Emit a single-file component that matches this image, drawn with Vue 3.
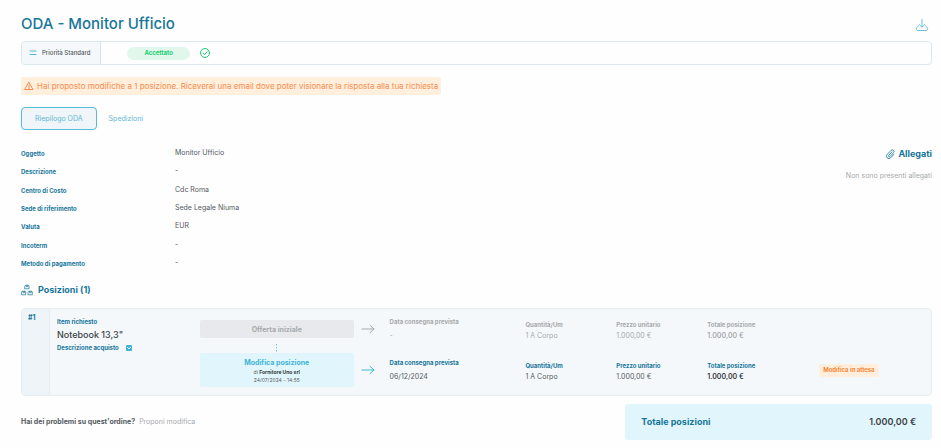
<script setup>
const details = [
  { label: 'Oggetto', value: 'Monitor Ufficio' },
  { label: 'Descrizione', value: '-' },
  { label: 'Centro di Costo', value: 'Cdc Roma' },
  { label: 'Sede di riferimento', value: 'Sede Legale Niuma' },
  { label: 'Valuta', value: 'EUR' },
  { label: 'Incoterm', value: '-' },
  { label: 'Metodo di pagamento', value: '-' },
]

const offers = [
  { id: 'initial', date: '-', quantity: '1 A Corpo', price: '1.000,00 €', total: '1.000,00 €' },
  { id: 'change', date: '06/12/2024', quantity: '1 A Corpo', price: '1.000,00 €', total: '1.000,00 €' },
]
</script>

<template>
  <main class="page">
    <header class="head">
      <h1>ODA - Monitor Ufficio</h1>
      <button class="download" type="button" aria-label="Scarica">
        <svg viewBox="0 0 14 14" width="14" height="14">
          <path d="M7 1.500v7.500M4.300 6.600L7 9.200l2.700-2.600" />
          <path d="M3.400 7.800C2.600 8.600 1.300 9.300 1.300 10.800c0 1 .7 1.700 1.700 1.700h8c1 0 1.700-.7 1.700-1.700 0-1.500-1.300-2.200-2.100-3" />
        </svg>
      </button>
    </header>

    <section class="status">
      <div class="priority">
        <svg viewBox="0 0 8 6" width="8" height="6"><path d="M1 1h6M1 4.500h6" /></svg>
        <span>Priorità Standard</span>
      </div>
      <span class="accepted">Accettato</span>
      <svg class="check" viewBox="0 0 12 12" width="12" height="12">
        <circle cx="6" cy="6" r="4.500" />
        <path d="M4 6.100l1.500 1.400L8.200 4.700" />
      </svg>
    </section>

    <p class="notice">
      <svg viewBox="0 0 10 10" width="10" height="10">
        <path d="M5 1.500L9 8.500H1z" />
        <path d="M5 4v2.200M5 7v.7" />
      </svg>
      <span>Hai proposto modifiche a 1 posizione. Riceverai una email dove poter visionare la risposta alla tua richiesta</span>
    </p>

    <nav class="tabs">
      <button class="tab active" type="button">Riepilogo ODA</button>
      <button class="tab" type="button">Spedizioni</button>
    </nav>

    <section class="summary">
      <dl class="details">
        <div v-for="d in details" :key="d.label" class="detail">
          <dt>{{ d.label }}</dt>
          <dd>{{ d.value }}</dd>
        </div>
      </dl>
      <aside class="attachments">
        <h2>
          <svg viewBox="0 0 12 12" width="10" height="10">
            <path d="M8.300 3.500L4.400 7.800a1 1 0 0 0 1.500 1.300l4.300-4.700a2 2 0 0 0-3-2.700L2.500 6.800a2.800 2.800 0 0 0 4.200 3.800l3.900-4.200" />
          </svg>
          Allegati
        </h2>
        <p>Non sono presenti allegati</p>
      </aside>
    </section>

    <h2 class="positions-title">
      <svg viewBox="0 0 12 12" width="12" height="12">
        <path d="M4 2l.5-.8h3L8 2v2.800H4zM.7 8l.5-.8h3l.5.800v2.800h-4zM7.300 8l.5-.8h3l.5.800v2.800h-4z" />
        <path d="M5.200 1.400v1.300h1.600V1.400M1.900 7.400v1.300h1.600V7.400M8.500 7.400v1.300h1.600V7.400" />
      </svg>
      Posizioni (1)
    </h2>

    <article class="card">
      <div class="index">#1</div>
      <div class="body">
        <div class="item">
          <h3>Item richiesto</h3>
          <p class="name">Notebook 13,3"</p>
          <div class="purchase">
            <span>Descrizione acquisto</span>
            <button class="expand" type="button" aria-label="Mostra descrizione acquisto">
              <svg viewBox="0 0 6 6" width="6" height="6"><path d="M1.200 2.200L3 3.900l1.800-1.700" /></svg>
            </button>
          </div>
        </div>

        <template v-for="o in offers" :key="o.id">
          <div class="step" :class="o.id">
            <strong v-if="o.id === 'initial'">Offerta iniziale</strong>
            <template v-else>
              <strong>Modifica posizione</strong>
              <span class="supplier">di <b>Fornitore Uno srl</b></span>
              <time datetime="2024-07-24T14:55">24/07/2024 - 14:55</time>
            </template>
          </div>
          <svg class="arrow" :class="o.id" viewBox="0 0 14 10" width="14" height="10">
            <path d="M1 5h12M9 1.300L13 5 9 8.700" />
          </svg>
          <dl class="field date" :class="o.id">
            <dt>Data consegna prevista</dt>
            <dd>{{ o.date }}</dd>
          </dl>
          <dl class="field" :class="o.id">
            <dt>Quantità/Um</dt>
            <dd>{{ o.quantity }}</dd>
          </dl>
          <dl class="field" :class="o.id">
            <dt>Prezzo unitario</dt>
            <dd>{{ o.price }}</dd>
          </dl>
          <dl class="field total" :class="o.id">
            <dt>Totale posizione</dt>
            <dd>{{ o.total }}</dd>
          </dl>
        </template>

        <svg class="dots" viewBox="0 0 2 8" width="2" height="8">
          <path d="M0 0h1v1.500H0zM0 3h1v1.500H0zM0 6h1v1.500H0z" />
        </svg>
        <span class="pending">Modifica in attesa</span>
      </div>
    </article>

    <footer class="foot">
      <p class="help">
        <strong>Hai dei problemi su quest'ordine?</strong>
        <a href="#">Proponi modifica</a>
      </p>
      <div class="grand">
        <span>Totale posizioni</span>
        <strong>1.000,00 €</strong>
      </div>
    </footer>
  </main>
</template>

<style>
body {
  margin: 0;
  background: #fefefe;
}
</style>

<style scoped>
.page {
  padding: 13px 9px 8px 21px;
  font-family: Inter, "Liberation Sans", sans-serif;
  font-size: 7px;
  line-height: 10px;
  color: #55595e;
}
h1, h2, h3, p, dl, dd {
  margin: 0;
}
button {
  padding: 0;
  border: 0;
  background: none;
  font: inherit;
}
svg {
  display: block;
  flex: none;
  fill: none;
  stroke: currentColor;
  stroke-linecap: round;
  stroke-linejoin: round;
}
.head {
  display: flex;
  justify-content: space-between;
  align-items: flex-end;
  margin-bottom: 6px;
  padding-right: 3px;
}
h1 {
  font-size: 15px;
  line-height: 22px;
  font-weight: 500;
  color: #17769a;
}
.download {
  padding-bottom: 3px;
  color: #6fbfdc;
}
.status {
  display: flex;
  align-items: center;
  border: 1px solid #dbe8ee;
  border-radius: 4px;
}
.priority {
  display: flex;
  align-items: center;
  gap: 5px;
  padding: 6px 10px 6px 7px;
  border-right: 1px solid #d5e4eb;
  border-radius: 3px 0 0 3px;
  background: #f4f8fb;
  font-size: 6px;
  font-weight: 500;
}
.priority svg {
  color: #51b9d8;
}
.accepted {
  margin: 0 9px 0 26px;
  padding: 1px 17px 2px;
  border-radius: 7px;
  background: #e2f7ec;
  color: #15cd72;
  font-size: 6px;
  font-weight: 700;
}
.check {
  color: #15cd72;
}
.notice {
  display: flex;
  align-items: center;
  gap: 3px;
  width: fit-content;
  margin: 12px 0;
  padding: 4px 3px;
  border-radius: 2px;
  background: #ffefdc;
  color: #f88b4c;
  font-size: 8px;
}
.tabs {
  display: flex;
  gap: 12px;
}
.tab {
  height: 23px;
  color: #63b7d5;
}
.tab.active {
  padding: 0 13px;
  border: 1px solid #55bdda;
  border-radius: 4px;
  background: #eff5f9;
}
.summary {
  display: flex;
  justify-content: space-between;
  margin-top: 14px;
}
.details {
  display: flex;
  flex-direction: column;
  justify-content: space-between;
  min-height: 128px;
}
.detail {
  display: grid;
  grid-template-columns: 154px auto;
  line-height: 18px;
}
dt, h3, .purchase {
  color: #17769a;
  font-size: 6px;
  font-weight: 700;
}
.detail dt {
  padding-top: 1px;
  line-height: 17px;
}
.attachments {
  display: flex;
  flex-direction: column;
  align-items: flex-end;
  gap: 10px;
  padding-top: 3px;
  color: #a7a9ac;
}
h2 {
  display: flex;
  align-items: center;
  gap: 3px;
  color: #17769a;
  font-size: 9px;
  line-height: 14px;
  font-weight: 700;
}
.positions-title {
  gap: 5px;
  margin: 11px 0;
}
.positions-title svg {
  stroke-width: 0.700;
}
.card {
  display: grid;
  grid-template-columns: 28px 1fr;
  border: 1px solid #e3edf2;
  border-radius: 4px;
  background: #f4f8fb;
}
.index {
  padding: 4px 6px;
  border-right: 1px solid #e3edf2;
  border-radius: 3px 0 0 3px;
  background: #eef4f8;
  color: #17769a;
  font-weight: 700;
}
.body {
  display: grid;
  grid-template-columns: 143fr 154fr 36fr 136fr 91fr 91fr 112fr 112fr;
  grid-template-rows: 26px 11px 34px;
  align-items: center;
  padding: 7px 0 8px 7px;
}
.item {
  grid-area: 1 / 1 / 4 / 2;
  align-self: start;
  padding-top: 1px;
}
h3 {
  line-height: 10px;
}
.name {
  color: #3c3f44;
  font-size: 9px;
  line-height: 16px;
  font-weight: 500;
}
.purchase {
  display: flex;
  align-items: center;
  gap: 7px;
}
.expand {
  border-radius: 1px;
  background: #3db4d6;
  color: #fff;
}
.initial {
  grid-row: 1;
}
.change {
  grid-row: 3;
}
.step {
  grid-column: 2;
  display: flex;
  flex-direction: column;
  align-items: center;
  justify-content: center;
  border-radius: 2px;
  font-size: 5px;
  line-height: 8px;
}
.step strong {
  font-size: 7px;
  line-height: 11px;
  font-weight: 700;
}
.step.initial {
  height: 18px;
  background: #e8e9ec;
  color: #a7a9ac;
}
.step.change {
  height: 34px;
  background: #e1f6fc;
}
.step.change strong {
  color: #3db4d6;
}
.supplier b {
  color: #33363a;
  font-weight: 700;
}
.arrow {
  justify-self: start;
  margin-left: 7px;
}
.arrow.initial {
  color: #a7a9ac;
}
.arrow.change {
  color: #3db4d6;
}
.field {
  display: flex;
  flex-direction: column;
  justify-content: flex-end;
  gap: 1px;
  height: 24px;
}
.field.date {
  gap: 4px;
}
.field.initial, .field.initial dt {
  color: #a7a9ac;
}
.total dd {
  font-weight: 600;
}
.total.change dd {
  color: #33363a;
}
.dots {
  grid-area: 2 / 2;
  justify-self: center;
  fill: #6cc4de;
  stroke: none;
}
.pending {
  grid-area: 3 / 8;
  justify-self: start;
  padding: 1px 4px 2px;
  border-radius: 2px;
  background: #ffefdc;
  color: #f97a1f;
  font-size: 6px;
  font-weight: 600;
}
.foot {
  display: grid;
  grid-template-columns: 605fr 307fr;
  align-items: center;
  margin-top: 8px;
}
.help {
  display: flex;
  gap: 4px;
}
.help strong {
  font-weight: 700;
}
.help a {
  color: #a7a9ac;
  text-decoration: none;
}
.grand {
  display: flex;
  align-items: center;
  justify-content: space-between;
  padding: 11px 16px;
  border-radius: 3px;
  background: #e1f6fc;
  color: #17769a;
  font-size: 9px;
  line-height: 14px;
  font-weight: 700;
}
.grand strong {
  color: #3c3f44;
  font-weight: 600;
}
</style>
